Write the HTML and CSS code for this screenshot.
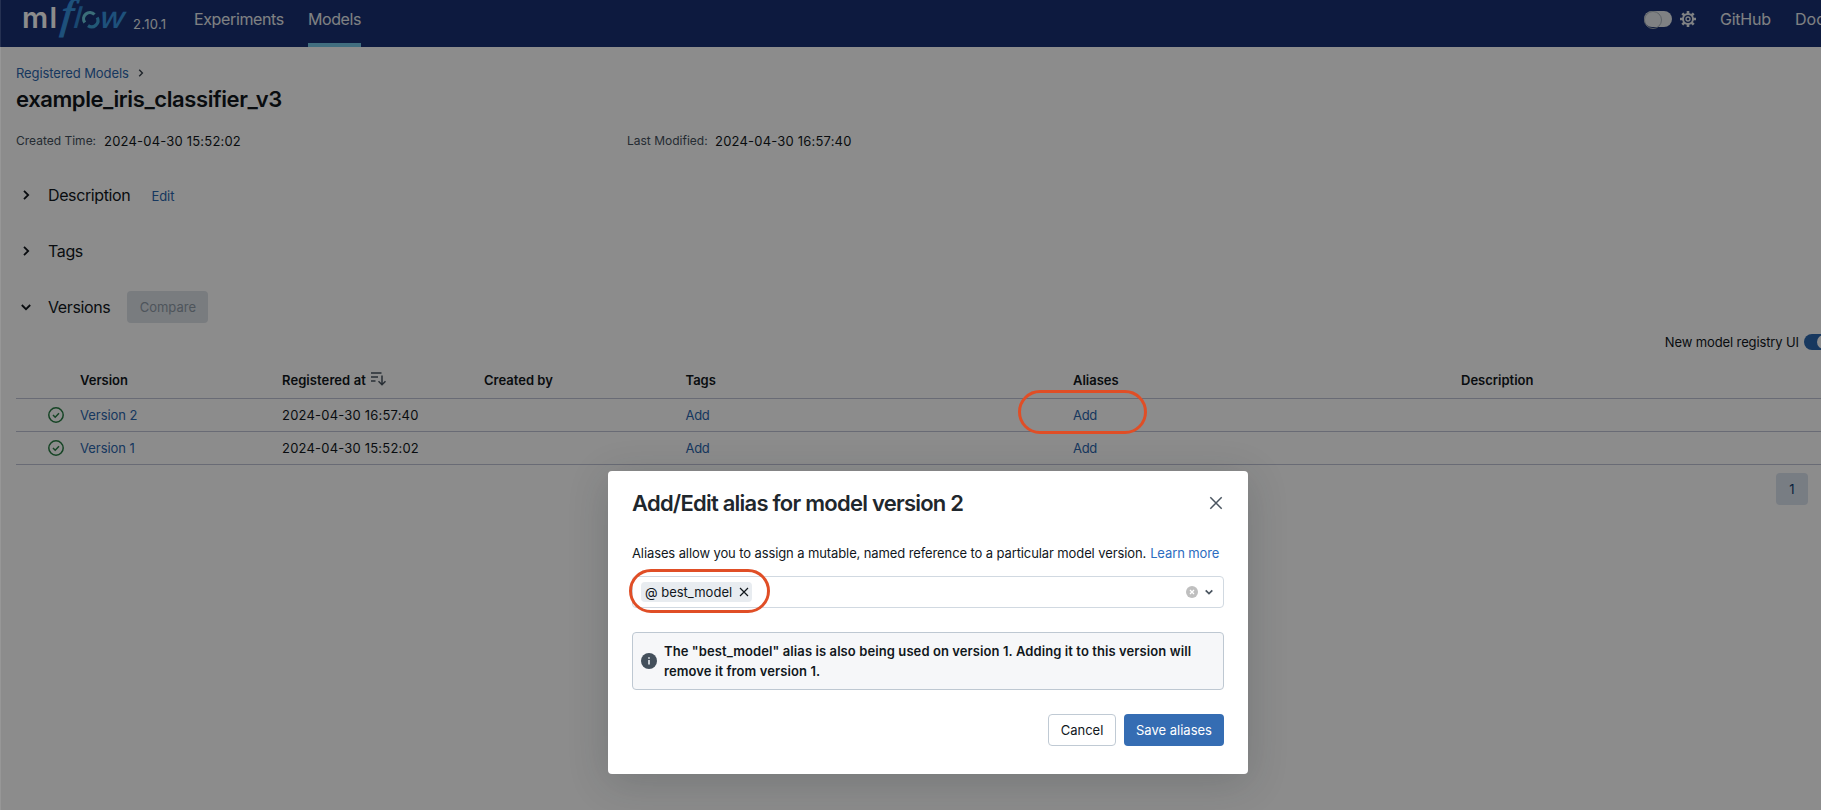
FILE: index.html
```html
<!DOCTYPE html>
<html lang="en">
<head>
<meta charset="utf-8">
<title>example_iris_classifier_v3 - MLflow</title>
<link rel="stylesheet" href="styles.css">
</head>
<body>
<div class="app">
  <header class="topbar">
    <svg class="logo" width="112" height="40" viewBox="0 0 112 40">
      <text class="logo-ml" x="-1" y="28" textLength="35">ml</text>
      <text class="logo-f" transform="translate(37 28) skewX(-6)">f</text>
      <text class="logo-flow" transform="translate(50 28) skewX(-6)">l</text>
      <path class="ring ring-top" d="M61.800 22.500A6.300 6.300 0 0 1 71.500 14.500"/>
      <path class="ring ring-bottom" d="M74.200 17.500A6.300 6.300 0 0 1 65 25.600"/>
      <text class="logo-w" transform="translate(75.500 28) skewX(-6)" textLength="26" lengthAdjust="spacingAndGlyphs">w</text>
    </svg>
    <span class="release">2.10.1</span>
    <nav class="nav">
      <a class="nav-exp">Experiments</a>
      <a class="nav-models">Models</a>
    </nav>
    <div class="right">
      <span class="theme"></span>
      <svg class="gear" width="18" height="18" viewBox="0 0 18 18"><circle cx="9" cy="9" r="5" fill="none" stroke="#e7ebee" stroke-width="2"/><circle cx="9" cy="9" r="2" fill="none" stroke="#e7ebee" stroke-width="1.300"/><path d="M9 1v3M9 14v3M1 9h3M14 9h3M3.300 3.300l2.200 2.200M12.500 12.500l2.200 2.200M3.300 14.700l2.200-2.200M12.500 5.500l2.200-2.200" stroke="#e7ebee" stroke-width="2.600"/></svg>
      <a class="github">GitHub</a>
      <a class="docs">Docs</a>
    </div>
  </header>
  <main class="page">
    <div class="crumbs"><a class="link crumb">Registered Models</a><svg width="6" height="10" viewBox="0 0 6 10"><path d="M1.200 1.800L4.400 5 1.200 8.200" fill="none" stroke="#3a444d" stroke-width="1.400"/></svg></div>
    <h1>example_iris_classifier_v3</h1>
    <div class="meta">
      <div class="meta-item"><span class="key">Created Time:</span><span class="date">2024-04-30 15:52:02</span></div>
      <div class="meta-item"><span class="key">Last Modified:</span><span class="date">2024-04-30 16:57:40</span></div>
    </div>
    <section class="fold"><svg class="chev" width="12" height="12" viewBox="0 0 12 12"><path d="M4 1.800L8.200 6 4 10.200"/></svg><h2>Description</h2><a class="link edit">Edit</a></section>
    <section class="fold"><svg class="chev" width="12" height="12" viewBox="0 0 12 12"><path d="M4 1.800L8.200 6 4 10.200"/></svg><h2>Tags</h2></section>
    <section class="fold"><svg class="chev" width="12" height="12" viewBox="0 0 12 12"><path d="M1.800 4L6 8.200 10.200 4"/></svg><h2>Versions</h2><button class="compare">Compare</button></section>
    <div class="switch-row"><span class="switch-label">New model registry UI</span><span class="switch"></span></div>
    <div class="table">
      <div class="row head"><span></span><b>Version</b><b class="sorted"><span class="sorted-label">Registered at</span><svg width="15" height="14" viewBox="0 0 15 14"><path d="M0 1h10.500M0 5h7M0 9h4.500M11 3.500V13M7.500 9.300l3.500 3.500 3.500-3.500" fill="none" stroke="#4a5560" stroke-width="1.500"/></svg></b><b>Created by</b><b>Tags</b><b>Aliases</b><b>Description</b></div>
      <div class="row"><svg class="ok" width="16" height="16" viewBox="0 0 16 16"><circle cx="8" cy="8" r="7.200"/><path d="M5 8l2.200 2.200L11 6.300"/></svg><a class="link">Version 2</a><span class="date">2024-04-30 16:57:40</span><span></span><a class="link add">Add</a><a class="link add">Add</a><span></span></div>
      <div class="row"><svg class="ok" width="16" height="16" viewBox="0 0 16 16"><circle cx="8" cy="8" r="7.200"/><path d="M5 8l2.200 2.200L11 6.300"/></svg><a class="link">Version 1</a><span class="date">2024-04-30 15:52:02</span><span></span><a class="link add">Add</a><a class="link add">Add</a><span></span></div>
    </div>
    <div class="pager"><span class="page-no">1</span></div>
  </main>
</div>
<div class="mask"></div>
<div class="callout callout-add"></div>
<div class="modal">
  <div class="modal-head"><h3>Add/Edit alias for model version 2</h3><svg width="14" height="14" viewBox="0 0 14 14"><path d="M1.300 1.300l11.400 11.400M12.700 1.300L1.300 12.700" stroke="#4a5560" stroke-width="1.500"/></svg></div>
  <p class="hint"><span>Aliases allow you to assign a mutable, named reference to a particular model version.</span><a class="learn">Learn more</a></p>
  <div class="select">
    <span class="tag"><span class="tag-text">@ best_model</span><svg width="10" height="10" viewBox="0 0 10 10"><path d="M1 1l8 8M9 1L1 9" stroke="#11171c" stroke-width="1.200"/></svg></span>
    <span class="select-icons">
      <svg width="12" height="12" viewBox="0 0 12 12"><circle cx="6" cy="6" r="6" fill="#bfbfbf"/><path d="M4 4l4 4M8 4L4 8" stroke="#fff" stroke-width="1.300"/></svg>
      <svg width="10" height="10" viewBox="0 0 10 10"><path d="M1.700 3.300L5 6.600l3.300-3.300" fill="none" stroke="#4a5560" stroke-width="1.700"/></svg>
    </span>
    <div class="callout callout-tag"></div>
  </div>
  <div class="alert"><svg width="16" height="16" viewBox="0 0 16 16"><circle cx="8" cy="8" r="8" fill="#44505c"/><path d="M8 7v4.500M8 4.200v1.600" stroke="#e8ecf0" stroke-width="1.600"/></svg><p>The "best_model" alias is also being used on version 1. Adding it to this version will<br>remove it from version 1.</p></div>
  <div class="actions"><button class="btn cancel">Cancel</button><button class="btn save">Save aliases</button></div>
</div>
</body>
</html>
```
FILE: styles.css
```css
* { box-sizing: border-box; }
body { margin: 0; width: 1821px; height: 810px; overflow: hidden; position: relative; font: 13px/20px Inter, "Noto Sans", sans-serif; color: #11171c; background: #fff; }
h1, h2, h3, p { margin: 0; }
button { font: inherit; padding: 0; }
svg { display: block; flex: none; }
.app { width: 1821px; height: 810px; overflow: hidden; }
.link { color: #2b66ad; letter-spacing: -.05px; }
.date { letter-spacing: .2px; }

.topbar { height: 47px; background: #183174; display: flex; align-items: flex-start; padding-left: 23px; color: #e7ebee; white-space: nowrap; }
.logo { margin-right: -2px; overflow: visible; }
.logo-ml { font: 600 29px Inter, sans-serif; fill: #fff; }
.logo-f { font: italic 42px "Liberation Serif", serif; fill: #3794e0; stroke: #3794e0; stroke-width: 1.200; }
.logo-flow { font: italic 500 30px Inter, sans-serif; fill: #2f82cc; }
.logo-w { font: italic 500 30px Inter, sans-serif; fill: #3794e0; }
.ring { fill: none; stroke-width: 3.200; }
.ring-top { stroke: #6cc8dc; }
.ring-bottom { stroke: #3fa2d8; }
.release { font-size: 13px; width: 61px; padding-top: 14px; letter-spacing: .3px; }
.nav { display: flex; gap: 24px; font-size: 16px; }
.nav a { height: 47px; padding-top: 9px; }
.nav-exp { width: 90px; letter-spacing: -.37px; }
.nav-models { width: 53px; border-bottom: 4px solid #77c9e8; letter-spacing: -.42px; }
.right { display: flex; margin-left: auto; font-size: 16px; padding-top: 9px; margin-right: -12px; }
.theme { width: 28px; height: 16px; border-radius: 8px; background: #e7ebee; margin: 2px 7px 0 0; display: flex; }
.theme::before { content: ""; width: 16px; height: 16px; border: 1px solid #a9b3bc; border-radius: 50%; }
.gear { margin: 1px 23px 0 0; }
.github { width: 75px; letter-spacing: -.25px; }
.docs { width: 38px; }

.page { padding: 16px 0 0 16px; }
.crumbs { display: flex; align-items: center; gap: 9px; height: 20px; }
.crumb { letter-spacing: -.1px; }
h1 { font-size: 22px; line-height: 28px; font-weight: 600; margin-top: 2px; letter-spacing: -.41px; }
.meta { display: flex; margin-top: 18px; }
.meta-item { width: 611px; display: flex; }
.key { color: #44505c; width: 88px; font-size: 12px; }
.fold { display: flex; align-items: center; height: 32px; margin-top: 24px; }
.meta + .fold { margin-top: 28px; }
.chev { margin: 0 16px 0 4px; }
.chev path { fill: none; stroke: #11171c; stroke-width: 1.800; }
h2 { font-size: 16px; line-height: 24px; font-weight: 400; letter-spacing: -.38px; }
.edit { margin-left: 21px; padding-top: 2px; }
.compare { width: 81px; height: 32px; margin-left: 17px; border: 0; border-radius: 4px; background: #dce2e8; color: #8f9ba7; }
.switch-row { display: flex; justify-content: flex-end; align-items: center; margin: 9px -11px 0 0; gap: 5px; }
.switch-label { letter-spacing: -.12px; }
.switch { width: 28px; height: 16px; border-radius: 8px; background: #2b66ad; display: flex; justify-content: flex-end; padding: 1px; }
.switch::before { content: ""; width: 14px; height: 14px; border-radius: 50%; background: #fff; }
.table { margin-top: 18px; }
.row { display: grid; grid-template-columns: 64px 202px 202px 201.500px 387.500px 388px 1fr; height: 33px; align-items: center; border-bottom: 1px solid #bfc3d6; }
.row.head { height: 29px; padding-bottom: 9px; }
.row b { font-weight: 600; }
.sorted { display: flex; gap: 5px; }
.sorted-label { letter-spacing: .08px; }
.sorted svg { margin-top: 2px; }
.add { letter-spacing: -.3px; }
.ok { margin-left: 32px; }
.ok circle, .ok path { fill: none; stroke: #277c43; stroke-width: 1.500; }
.pager { display: flex; justify-content: flex-end; padding: 8px 13px 0 0; }
.page-no { width: 32px; height: 32px; line-height: 32px; text-align: center; border-radius: 4px; background: #dbe3ef; color: #0e3a70; }

.mask { position: absolute; inset: 0; background: rgba(0, 0, 0, .45); box-shadow: inset 1px 0 rgba(255, 255, 255, .1); }
.callout { position: absolute; border: 3px solid #e04e26; border-radius: 22px; }
.callout-add { left: 1018px; top: 390px; width: 129px; height: 44px; }
.callout-tag { left: -4px; top: -8px; width: 141px; height: 44px; }
.modal { position: absolute; left: 608px; top: 471px; width: 640px; height: 303px; padding: 20px 24px; border-radius: 4px; background: #fff; box-shadow: 0 8px 40px rgba(31, 39, 45, .2); }
.modal-head { display: flex; justify-content: space-between; align-items: center; height: 24px; padding-right: 1px; }
h3 { font-size: 22px; line-height: 28px; font-weight: 600; letter-spacing: -.76px; color: #1f272d; }
.hint { display: flex; gap: 4px; margin-top: 28px; white-space: nowrap; letter-spacing: -.107px; }
.learn { color: #2c6cc0; }
.select { position: relative; display: flex; align-items: center; justify-content: space-between; height: 32px; margin-top: 13px; padding: 0 9px 0 8px; border: 1px solid #d1d9e1; border-radius: 4px; }
.tag { display: flex; align-items: center; justify-content: space-between; width: 111px; height: 20px; padding: 0 3px 0 4px; border-radius: 4px; background: #e8ecf0; }
.select-icons { display: flex; align-items: center; gap: 6px; }
.alert { display: flex; align-items: center; gap: 7px; height: 58px; margin-top: 24px; padding-left: 8px; border: 1px solid #bec8d2; border-radius: 4px; background: #f6f7f9; font-weight: 600; white-space: nowrap; letter-spacing: .09px; }
.actions { display: flex; justify-content: flex-end; gap: 8px; margin-top: 24px; }
.btn { height: 32px; border-radius: 4px; }
.cancel { width: 68px; border: 1px solid #c0cad4; background: #fff; color: #11171c; }
.save { width: 100px; border: 0; background: #356db3; color: #fff; }
```
